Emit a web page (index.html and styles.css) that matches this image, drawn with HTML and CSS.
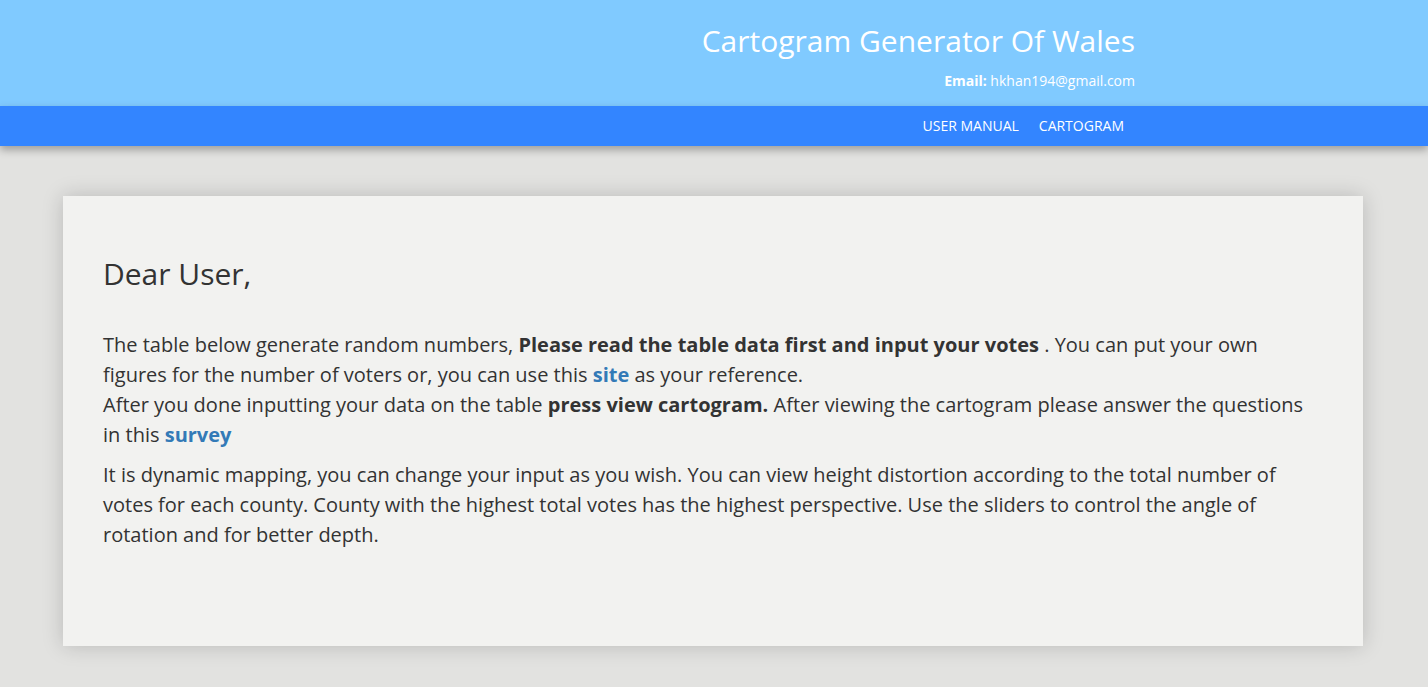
FILE: index.html
```html
<!DOCTYPE html>
<html>
<head>
<meta charset="utf-8">
<link rel="stylesheet" href="styles.css">
</head>
<body>
<header class="top">
  <div class="top-inner">
    <h1 class="title">Cartogram Generator Of Wales</h1>
    <div class="email"><b>Email:</b> hkhan194@gmail.com</div>
  </div>
</header>
<nav class="nav">
  <ul class="nav-list">
    <li><a href="#">USER MANUAL</a></li>
    <li><a href="#">CARTOGRAM</a></li>
  </ul>
</nav>
<main class="main">
  <section class="card">
    <h2 class="greet">Dear User,</h2>
    <p class="para">The table below generate random numbers, <b>Please read the table data first and input your votes</b> . You can put your own figures for the number of voters or, you can use this <a class="link" href="#">site</a> as your reference.<br>After you done inputting your data on the table <b>press view cartogram.</b> After viewing the cartogram please answer the questions in this <a class="link" href="#">survey</a></p>
    <p class="para">It is dynamic mapping, you can change your input as you wish. You can view height distortion according to the total number of votes for each county. County with the highest total votes has the highest perspective. Use the sliders to control the angle of rotation and for better depth.</p>
  </section>
</main>
</body>
</html>
```
FILE: styles.css
```css
html, body {
  margin: 0;
  padding: 0;
}
body {
  background: #e2e2e0;
  font-family: "Open Sans", "Liberation Sans", sans-serif;
  color: #333;
  min-height: 687px;
}
.top {
  background: #80caff;
  height: 106px;
}
.top-inner {
  display: flex;
  flex-direction: column;
  align-items: flex-end;
  padding-right: 293px;
}
.title {
  margin: 0;
  padding-top: 21px;
  font-size: 30px;
  font-weight: 400;
  line-height: 40px;
  color: #fff;
}
.email {
  margin-top: 10px;
  font-size: 14px;
  line-height: 20px;
  color: #fff;
}
.nav {
  position: relative;
  z-index: 2;
  background: #3385ff;
  height: 40px;
  box-shadow: 0 4px 8px rgba(0,0,0,0.3);
}
.nav-list {
  list-style: none;
  margin: 0;
  padding: 0 294px 0 0;
  display: flex;
  justify-content: flex-end;
  height: 40px;
  align-items: center;
}
.nav-list li a {
  display: block;
  padding: 0 10px;
  color: #fff;
  text-decoration: none;
  font-size: 14px;
  line-height: 40px;
}
.main {
  padding: 50px 65px 41px 63px;
}
.card {
  background: #f2f2f0;
  box-shadow: 0 0 20px rgba(0,0,0,0.18);
  padding: 61px 40px 95px 40px;
  height: 450px;
  box-sizing: border-box;
}
.greet {
  margin: 0 0 40px 0;
  font-size: 30px;
  font-weight: 400;
  line-height: 33px;
  color: #333;
}
.para {
  margin: 0 0 10px 0;
  font-size: 20px;
  line-height: 30px;
}
.para b {
  font-weight: 700;
}
.link {
  color: #337ab7;
  font-weight: 700;
  text-decoration: none;
}
```
